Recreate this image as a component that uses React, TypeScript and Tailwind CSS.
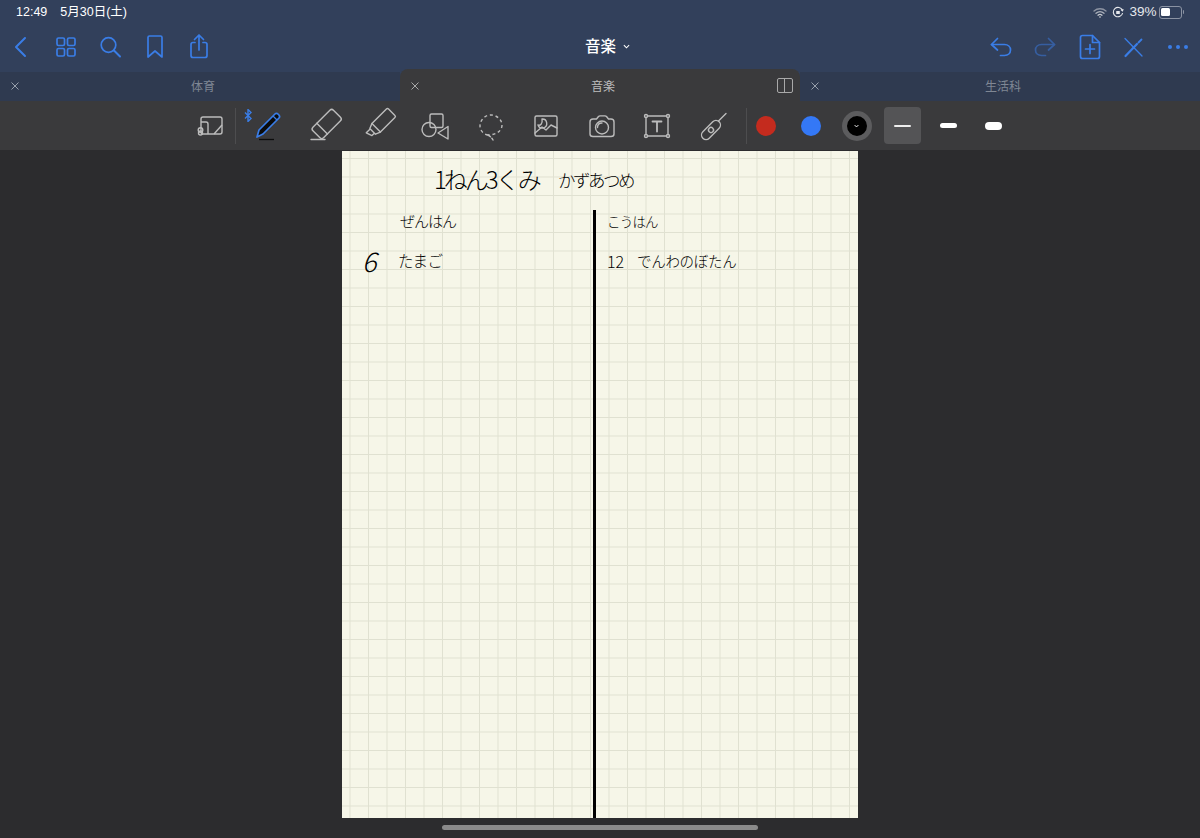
const ui = "font-['Liberation_Sans','Noto_Sans_CJK_JP',sans-serif]"
const ink = "absolute font-['Noto_Sans_CJK_JP',sans-serif] font-light leading-none whitespace-nowrap text-black"

function NavIcon({ children, dim }: { children: React.ReactNode; dim?: boolean }) {
  return (
    <svg
      viewBox="0 0 30 30"
      className={`w-[30px] h-[30px] ${dim ? "opacity-50" : ""}`}
      fill="none"
      stroke="#3a7de6"
      strokeWidth={1.7}
      strokeLinecap="round"
      strokeLinejoin="round"
    >
      {children}
    </svg>
  )
}

function NavSlot({ children }: { children: React.ReactNode }) {
  return <div className="w-[44.5px] flex justify-center items-center">{children}</div>
}

function Tool({ children }: { children: React.ReactNode }) {
  return (
    <svg
      viewBox="0 0 40 40"
      className="w-[40px] h-[40px] mx-[7.8px] shrink-0"
      fill="none"
      stroke="#bcbcbc"
      strokeWidth={1.4}
      strokeLinecap="round"
      strokeLinejoin="round"
    >
      {children}
    </svg>
  )
}

function Tab({ label, active, split }: { label: string; active?: boolean; split?: boolean }) {
  return (
    <div
      className={`relative flex-1 flex items-center justify-center text-[12px] ${
        active ? "h-[32px] pt-[4px] rounded-t-[8px] bg-[#3a3a3c] text-[#bdbdbd]" : "h-[29px] pt-[1px] bg-[#2f3a50] text-[#7f8794]"
      }`}
    >
      <svg
        viewBox="0 0 10 10"
        className={`absolute left-[10px] w-[10px] h-[10px] ${active ? "top-[12px]" : "top-[9px]"}`}
        stroke={active ? "#a9a9a9" : "#98a0ac"}
        strokeWidth={1}
      >
        <path d="M1.5 1.5l7 7M8.5 1.5l-7 7" />
      </svg>
      <span className="ml-[6px]">{label}</span>
      {split && (
        <div className="absolute right-[7px] top-[9px] w-[16px] h-[15px] rounded-[2px] border border-[#a9a9a9] flex">
          <div className="w-1/2 border-r border-[#a9a9a9]" />
        </div>
      )}
    </div>
  )
}

export default function App() {
  return (
    <div className={`relative w-[1200px] h-[838px] overflow-hidden flex flex-col bg-[#2c2c2e] ${ui}`}>
      {/* top bar */}
      <header className="bg-[#32405b] shrink-0">
        <div className="h-[24px] px-[16px] flex items-center justify-between text-white text-[12.5px]">
          <div className="flex gap-[13px]">
            <span>12:49</span>
            <span>5月30日(土)</span>
          </div>
          <div className="flex items-center text-[#e6e8ec]">
            <svg viewBox="0 0 14 11" className="w-[14px] h-[11px]" fill="none" stroke="#c9ccd2" strokeWidth={1.3} strokeLinecap="round">
              <path d="M1 4c3.4-3 8.6-3 12 0" opacity={0.6} />
              <path d="M3 6.2c2.3-2 5.7-2 8 0" opacity={0.8} />
              <path d="M5 8.2c1.2-1 2.8-1 4 0" />
              <circle cx="7" cy="10" r="0.7" fill="#fff" stroke="none" />
            </svg>
            <svg viewBox="0 0 12 12" className="w-[12px] h-[12px] ml-[5px]" fill="none" stroke="#e6e8ec" strokeWidth={1.1}>
              <path d="M10.3 4.2A4.7 4.7 0 1 0 10.6 7" />
              <path d="M9 3.6l1.5 1.2.6-1.8" />
              <rect x="4.2" y="5" width="3.6" height="3" fill="#e6e8ec" stroke="none" rx="0.5" />
            </svg>
            <span className="ml-[5px] text-[13.5px]">39%</span>
            <div className="ml-[2px] w-[23px] h-[13px] rounded-[3px] border border-[#8b93a3] p-[1.5px]">
              <div className="w-[9px] h-full rounded-[1.5px] bg-white" />
            </div>
            <div className="w-[1.5px] h-[4px] ml-[1px] rounded-r bg-[#8b93a3]" />
          </div>
        </div>

        <div className="h-[45px] grid grid-cols-[1fr_auto_1fr] items-center">
          <div className="flex -ml-[1px]">
            <NavSlot>
              <NavIcon>
                <path d="M19 6l-9 9 9 9" strokeWidth={2} />
              </NavIcon>
            </NavSlot>
            <NavSlot>
              <NavIcon>
                <rect x="6" y="6" width="7.5" height="7.5" rx="1.5" />
                <rect x="16.5" y="6" width="7.5" height="7.5" rx="1.5" />
                <rect x="6" y="16.5" width="7.5" height="7.5" rx="1.5" />
                <rect x="16.5" y="16.5" width="7.5" height="7.5" rx="1.5" />
              </NavIcon>
            </NavSlot>
            <NavSlot>
              <NavIcon>
                <circle cx="13.5" cy="13" r="7.3" />
                <path d="M19 18.5l6 6" strokeWidth={2} />
              </NavIcon>
            </NavSlot>
            <NavSlot>
              <NavIcon>
                <path d="M8 5.5c0-1 .6-1.5 1.5-1.5h11c.9 0 1.5.5 1.5 1.5V25l-7-6-7 6z" />
              </NavIcon>
            </NavSlot>
            <NavSlot>
              <NavIcon>
                <path d="M11 10.5H9c-1.3 0-2 .8-2 2v11c0 1.3.7 2 2 2h12c1.3 0 2-.7 2-2v-11c0-1.2-.7-2-2-2h-2" />
                <path d="M15 18V3.5M10.5 7.5L15 3l4.500 4.500" />
              </NavIcon>
            </NavSlot>
          </div>
          <div className="ml-[15px] flex items-center gap-[7px] text-white font-medium text-[15.500px]">
            <span>音楽</span>
            <svg viewBox="0 0 8 5" className="w-[7px] h-[5px]" fill="none" stroke="#fff" strokeWidth={1.2}>
              <path d="M1 1l3 3 3-3" />
            </svg>
          </div>
          <div className="flex justify-end">
            <NavSlot>
              <NavIcon>
                <g transform="translate(1.500 0)">
                  <path d="M11 6.500l-6 6 6 5.500" />
                  <path d="M5 12.500h13c3.500 0 6 2.300 6 5.500s-2.500 5.500-6 5.500h-4" />
                </g>
              </NavIcon>
            </NavSlot>
            <NavSlot>
              <NavIcon dim>
                <g transform="translate(.5 0)">
                  <path d="M19 6.500l6 6-6 5.500" />
                  <path d="M25 12.500H12c-3.500 0-6 2.300-6 5.500s2.500 5.500 6 5.500h4" />
                </g>
              </NavIcon>
            </NavSlot>
            <NavSlot>
              <NavIcon>
                <g transform="translate(1 0)">
                  <path d="M7.500 3.500h10l7 7v14c0 1.300-.7 2-2 2h-15c-1.300 0-2-.7-2-2v-19c0-1.300.7-2 2-2z" />
                  <path d="M17.500 3.500v7h7M15 12.500v9M10.500 17h9" />
                </g>
              </NavIcon>
            </NavSlot>
            <NavSlot>
              <NavIcon>
                <path d="M7 6.500l17 17.500" strokeWidth={1.3} />
                <path d="M7.500 24l11.500-12" strokeWidth={2.200} />
                <path d="M20.500 10.500l3-3" strokeWidth={1.800} />
              </NavIcon>
            </NavSlot>
            <NavSlot>
              <svg viewBox="0 0 24 6" className="w-[24px] h-[6px]" fill="#3a7de6">
                <circle cx="4" cy="3" r="2" />
                <circle cx="12" cy="3" r="2" />
                <circle cx="20" cy="3" r="2" />
              </svg>
            </NavSlot>
          </div>
        </div>

        <div className="h-[32px] flex items-end">
          <Tab label="体育" />
          <Tab label="音楽" active split />
          <Tab label="生活科" />
        </div>
      </header>

      {/* drawing toolbar */}
      <div className="h-[49px] shrink-0 bg-[#3a3a3c] flex items-center pl-[192px]">
        <svg viewBox="0 0 36 36" className="w-[36px] h-[36px] shrink-0" fill="none" stroke="#bcbcbc" strokeWidth={1.400} strokeLinejoin="round">
          <rect x="9" y="9" width="21" height="17" rx="2" />
          <path d="M30 17l-8 9" />
          <path d="M9 14h5c1.500 0 2 1 2 2v10" />
          <circle cx="8.500" cy="22" r="2.300" />
          <circle cx="8.500" cy="25" r="2" />
        </svg>
        <div className="w-px h-[36px] bg-[#4d4d4f] ml-[6.500px]" />
        <div className="relative w-[5px] shrink-0">
          <svg viewBox="0 0 8 13" className="absolute left-[8px] -top-[17px] w-[8px] h-[13px]" fill="none" stroke="#3a7de6" strokeWidth={1.4}>
            <path d="M1 3.500l6 6-3 3V.5l3 3-6 6" />
          </svg>
        </div>
        <svg viewBox="0 0 40 40" className="w-[40px] h-[40px] mx-[7.8px] shrink-0" strokeLinejoin="round">
          <path d="M9 31l2-7L27 8c2-2 6 2 4 4L15 28z" fill="#0c0c0c" stroke="#3a7de6" strokeWidth={1.700} />
          <path d="M25 10l4 4" stroke="#3a7de6" strokeWidth={1.2} />
          <path d="M11 33.500h15" stroke="#0c0c0c" strokeWidth={1.3} />
        </svg>
        <Tool>
          <g transform="rotate(45 22 18)">
            <rect x="15" y="3" width="15" height="29" rx="2.500" />
            <path d="M15 24h15" />
          </g>
          <path d="M7 33.500h14" />
        </Tool>
        <Tool>
          <g transform="rotate(45 20 19)">
            <path d="M14 2.500c0-1 .5-1.500 1.500-1.500h9c1 0 1.500.5 1.500 1.500V23H14z" />
            <path d="M14 23l2 5h8l2-5M16.500 28v5.500l6-2V28" />
          </g>
        </Tool>
        <Tool>
          <rect x="15" y="8" width="13" height="13.500" rx="1.500" />
          <circle cx="14" cy="23.500" r="7" />
          <path d="M33 20.500v12.500l-10-6z" />
        </Tool>
        <Tool>
          <path d="M17 29c-5-1-8-5-8-9 0-6 5-11 11-11s11 5 11 10c0 6-6 10-14 10z" strokeDasharray="3 2.800" strokeLinecap="butt" />
          <path d="M17 29c2 1 4 3 5 5" strokeDasharray="3 2" />
        </Tool>
        <Tool>
          <rect x="9" y="10" width="22" height="20" rx="1.500" />
          <path d="M9 27l7-6 4 3 5-5 6 3" />
          <path d="M16 13a4.500 4.500 0 1 1-4 6c2 1 5-1 4-6z" />
        </Tool>
        <Tool>
          <path d="M11 13h3.500l2-2.500c.4-.4.8-.6 1.500-.6h5c.7 0 1.100.2 1.500.6l2 2.500H29c1.500 0 3 1 3 3v12c0 1.500-1.500 2.500-3 2.500H11c-1.500 0-3-1-3-2.500V16c0-2 1.500-3 3-3z" />
          <circle cx="20" cy="21.500" r="6.500" />
          <path d="M15.500 21.500c0-3 2-4.500 4.500-4.500" />
        </Tool>
        <Tool>
          <rect x="9" y="10" width="22" height="20" />
          <path d="M15.500 15.500h9M20 15.500v10" strokeWidth={1.8} />
          <g fill="#3a3a3c">
            <circle cx="9" cy="10" r="1.500" />
            <circle cx="31" cy="10" r="1.500" />
            <circle cx="9" cy="30" r="1.500" />
            <circle cx="31" cy="30" r="1.500" />
          </g>
        </Tool>
        <Tool>
          <path d="M25.500 15l7.500-7.500" />
          <g transform="rotate(-45 18 24)">
            <rect x="6.500" y="19.500" width="23" height="9" rx="4.500" />
            <circle cx="18" cy="24" r="2.500" />
          </g>
        </Tool>
        <div className="w-px h-[36px] bg-[#4d4d4f] ml-[5px] mr-[1px]" />
        <div className="flex items-center gap-[9.400px]">
          <div className="w-[36px] flex justify-center">
            <div className="w-[20px] h-[20px] rounded-full bg-[#c42b1e]" />
          </div>
          <div className="w-[36px] flex justify-center">
            <div className="w-[20px] h-[20px] rounded-full bg-[#3478f6]" />
          </div>
          <div className="w-[36px] flex justify-center">
            <div className="w-[30px] h-[30px] rounded-full border-[5px] border-[#5c5c5e] bg-black flex items-center justify-center">
              <svg viewBox="0 0 8 5" className="w-[5px] h-[4px]" fill="none" stroke="#fff" strokeWidth={1.500}>
                <path d="M1 1l3 3 3-3" />
              </svg>
            </div>
          </div>
          <div className="w-[37px] h-[37px] rounded-[4px] bg-[#545456] flex items-center justify-center">
            <div className="w-[17px] h-[2px] rounded-full bg-[#eeeeee]" />
          </div>
          <div className="w-[36px] flex justify-center">
            <div className="w-[17px] h-[5px] rounded-full bg-white" />
          </div>
          <div className="w-[36px] flex justify-center">
            <div className="w-[17px] h-[8px] rounded-[4px] bg-white" />
          </div>
        </div>
      </div>

      {/* page */}
      <main className="flex-1 flex justify-center pt-[1px] pb-[20px]">
        <div className="relative w-[516px] bg-[#f6f6e8] bg-[linear-gradient(to_right,#e0e1d1_1px,transparent_1px),linear-gradient(to_bottom,#e0e1d1_1px,transparent_1px)] bg-[size:18.5px_18.5px] bg-[position:7.500px_7px]">
          <span className={`${ink} left-[92px] top-[16px] text-[24px] tracking-[-3px]`}>1ねん3くみ</span>
          <span className={`${ink} left-[216px] top-[20px] text-[17.500px] tracking-[-2.500px]`}>かずあつめ</span>
          <span className={`${ink} left-[58px] top-[62px] text-[15px] tracking-[-1px]`}>ぜんはん</span>
          <span className={`${ink} left-[20px] top-[96px] text-[27px] font-extralight italic`}>6</span>
          <span className={`${ink} left-[56px] top-[102px] text-[15.500px] tracking-[-0.500px]`}>たまご</span>
          <span className={`${ink} left-[265px] top-[64px] text-[13.500px] tracking-[-0.800px]`}>こうはん</span>
          <span className={`${ink} left-[265px] top-[102px] text-[16px]`}>12</span>
          <span className={`${ink} left-[295px] top-[103px] text-[14.500px] tracking-[-0.300px]`}>でんわのぼたん</span>
          <div className="absolute left-[251px] top-[59px] bottom-0 w-[3px] bg-black" />
        </div>
      </main>

      <div className="absolute left-[442px] top-[825px] w-[316px] h-[5px] rounded-full bg-[#8a8a8a]" />
    </div>
  )
}
